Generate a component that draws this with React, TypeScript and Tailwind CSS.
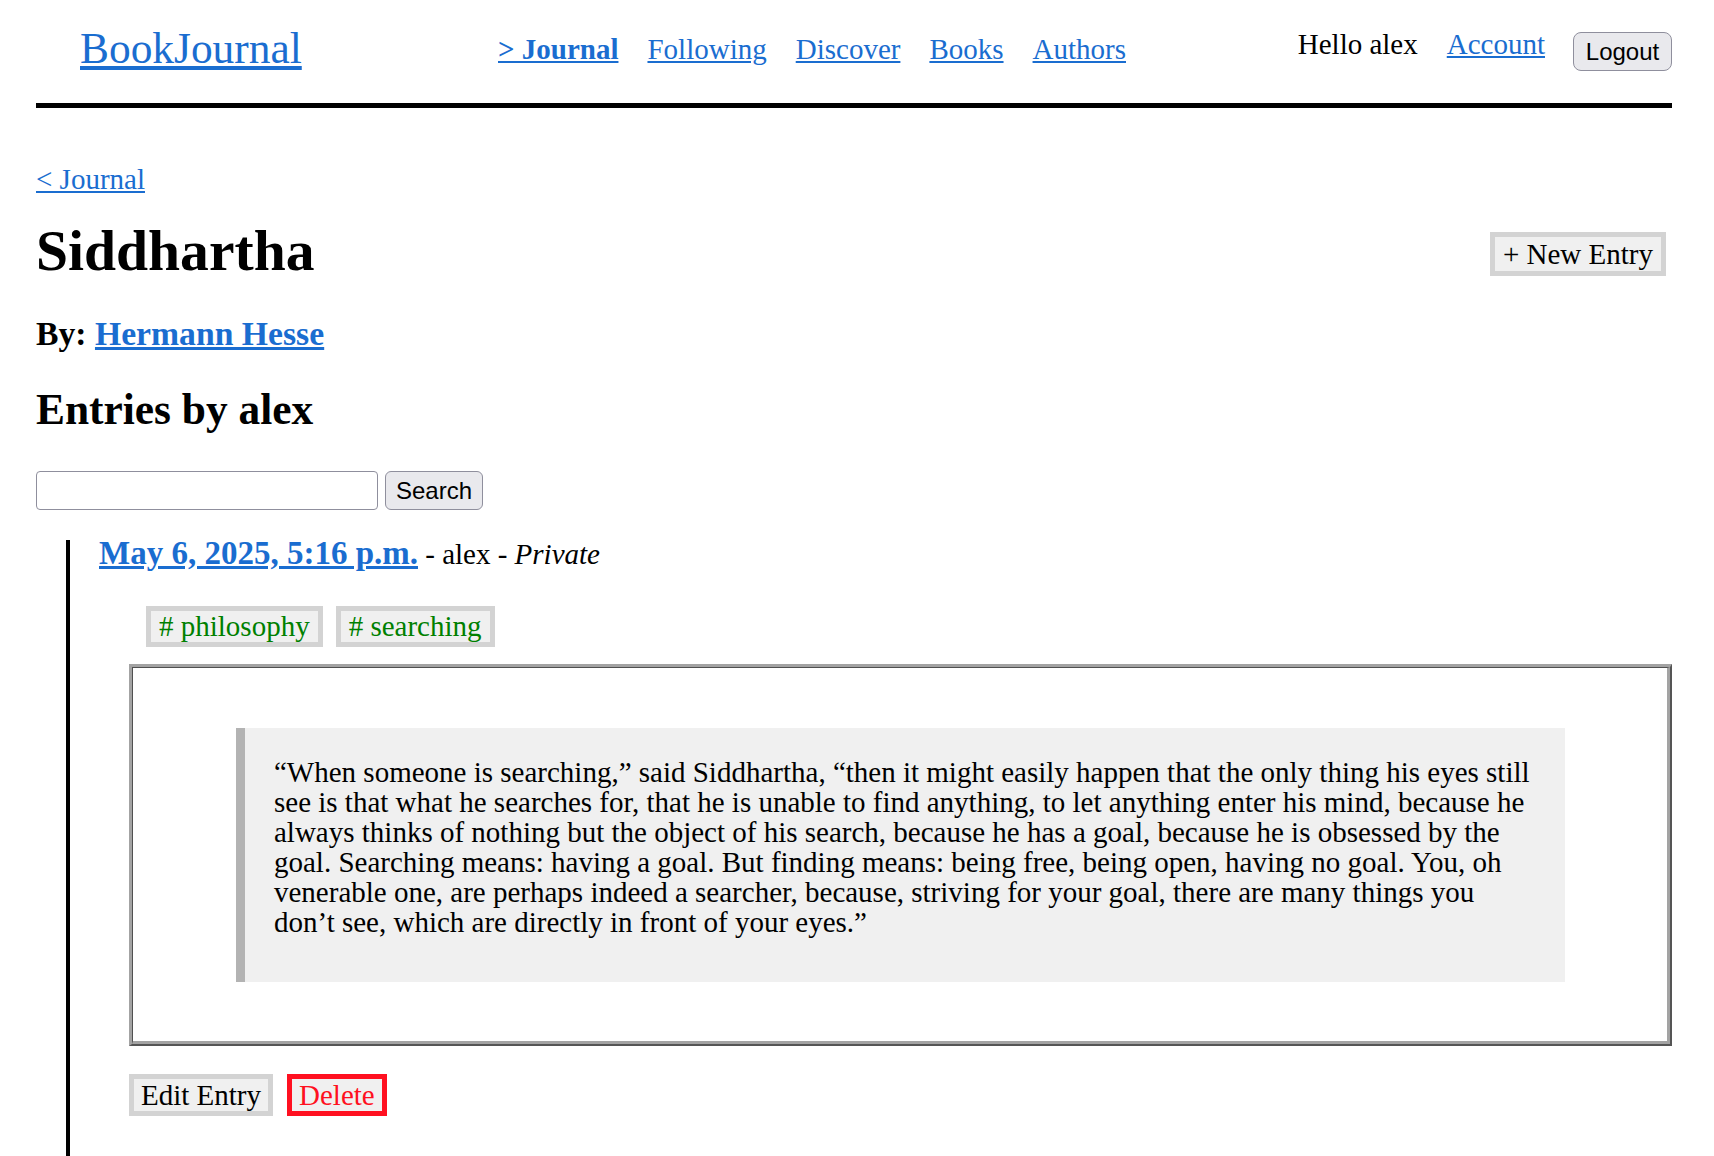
import React from 'react';

const link = 'text-[#1a6dd0] underline';

const Tag = ({ name }: { name: string }) => (
  <span className="border-[5px] border-[#d3d3d3] bg-[#f0f0f0] px-[8px] leading-[31px] text-[#008000]">
    # {name}
  </span>
);

export default function App() {
  return (
    <div className="min-h-screen overflow-hidden bg-white pl-[36px] pr-[42px] font-['Liberation_Serif',serif] text-[29px] text-black">
      <header className="flex h-[108px] items-center border-b-[5px] border-black">
        <div className="mb-[4px] w-[462px] pl-[44px]">
          <a href="#" className={`${link} text-[43.4px] leading-[50px]`}>
            BookJournal
          </a>
        </div>
        <nav className="mb-[4px] flex gap-[29px] leading-[33px]">
          <a href="#" className={`${link} font-bold`}>
            &gt; Journal
          </a>
          <a href="#" className={link}>Following</a>
          <a href="#" className={link}>Discover</a>
          <a href="#" className={link}>Books</a>
          <a href="#" className={link}>Authors</a>
        </nav>
        <div className="ml-auto flex items-center leading-[33px]">
          <span className="mb-[14px]">Hello alex</span>
          <a href="#" className={`${link} mb-[14px] ml-[29px]`}>
            Account
          </a>
          <button className="ml-[28px] h-[39px] w-[99px] rounded-[8px] border border-[#8f8f9d] bg-[#e9e9ed] font-['Liberation_Sans',sans-serif] text-[24px]">
            Logout
          </button>
        </div>
      </header>

      <div className="mt-[55px] leading-[33px]">
        <a href="#" className={link}>
          &lt; Journal
        </a>
      </div>

      <div className="mt-[22px] flex items-center justify-between">
        <h1 className="text-[57.6px] font-bold leading-[66px]">Siddhartha</h1>
        <button className="mr-[6px] mt-[6px] border-[5px] border-[#d3d3d3] bg-[#f0f0f0] px-[8px] leading-[34px]">
          + New Entry
        </button>
      </div>

      <h3 className="mt-[30px] text-[33.7px] font-bold leading-[39px]">
        By:{' '}
        <a href="#" className={link}>
          Hermann Hesse
        </a>
      </h3>

      <h2 className="mt-[31px] text-[43.4px] font-bold leading-[50px]">Entries by alex</h2>

      <div className="mt-[37px] flex gap-[7px]">
        <input className="h-[39px] w-[342px] rounded-[4px] border border-[#8f8f9d] bg-white" />
        <button className="h-[39px] w-[98px] rounded-[6px] border border-[#8f8f9d] bg-[#e9e9ed] font-['Liberation_Sans',sans-serif] text-[24px]">
          Search
        </button>
      </div>

      <div className="ml-[30px] mt-[30px] border-l-[4px] border-black pb-[60px] pl-[29px]">
        <div className="leading-[26px]">
          <a href="#" className={`${link} text-[33px] font-bold`}>
            May 6, 2025, 5:16 p.m.
          </a>{' '}
          - alex - <em>Private</em>
        </div>

        <div className="ml-[47px] mt-[39px] flex gap-[13px]">
          <Tag name="philosophy" />
          <Tag name="searching" />
        </div>

        <div className="ml-[30px] mt-[17px] border-b-[2px] border-l-[3px] border-r-[2px] border-t-[3px] border-b-[#555] border-l-[#a3a3a3] border-r-[#555] border-t-[#a3a3a3]">
          <div className="border-b-[3px] border-l-[1px] border-r-[3px] border-t-[1px] border-b-[#a3a3a3] border-l-[#505050] border-r-[#a3a3a3] border-t-[#505050] pb-[59px] pl-[103px] pr-[102px] pt-[60px]">
            <blockquote className="border-l-[9px] border-[#b3b3b3] bg-[#f0f0f0] pb-[45px] pl-[29px] pr-[32px] pt-[29px] leading-[30px]">
              <p>
                “When someone is searching,” said Siddhartha, “then it might easily happen that the only thing
                his eyes still see is that what he searches for, that he is unable to find anything, to let
                anything enter his mind, because he always thinks of nothing but the object of his search,
                because he has a goal, because he is obsessed by the goal. Searching means: having a goal. But
                finding means: being free, being open, having no goal. You, oh venerable one, are perhaps indeed
                a searcher, because, striving for your goal, there are many things you don’t see, which are
                directly in front of your eyes.”
              </p>
            </blockquote>
          </div>
        </div>

        <div className="ml-[30px] mt-[28px] flex gap-[14px]">
          <button className="border-[5px] border-[#d3d3d3] bg-[#f0f0f0] px-[7px] leading-[32px]">Edit Entry</button>
          <button className="border-[5px] border-[#ff1020] bg-[#f0f0f0] px-[7px] leading-[32px] text-[#ff1020]">
            Delete
          </button>
        </div>
      </div>
    </div>
  );
}
